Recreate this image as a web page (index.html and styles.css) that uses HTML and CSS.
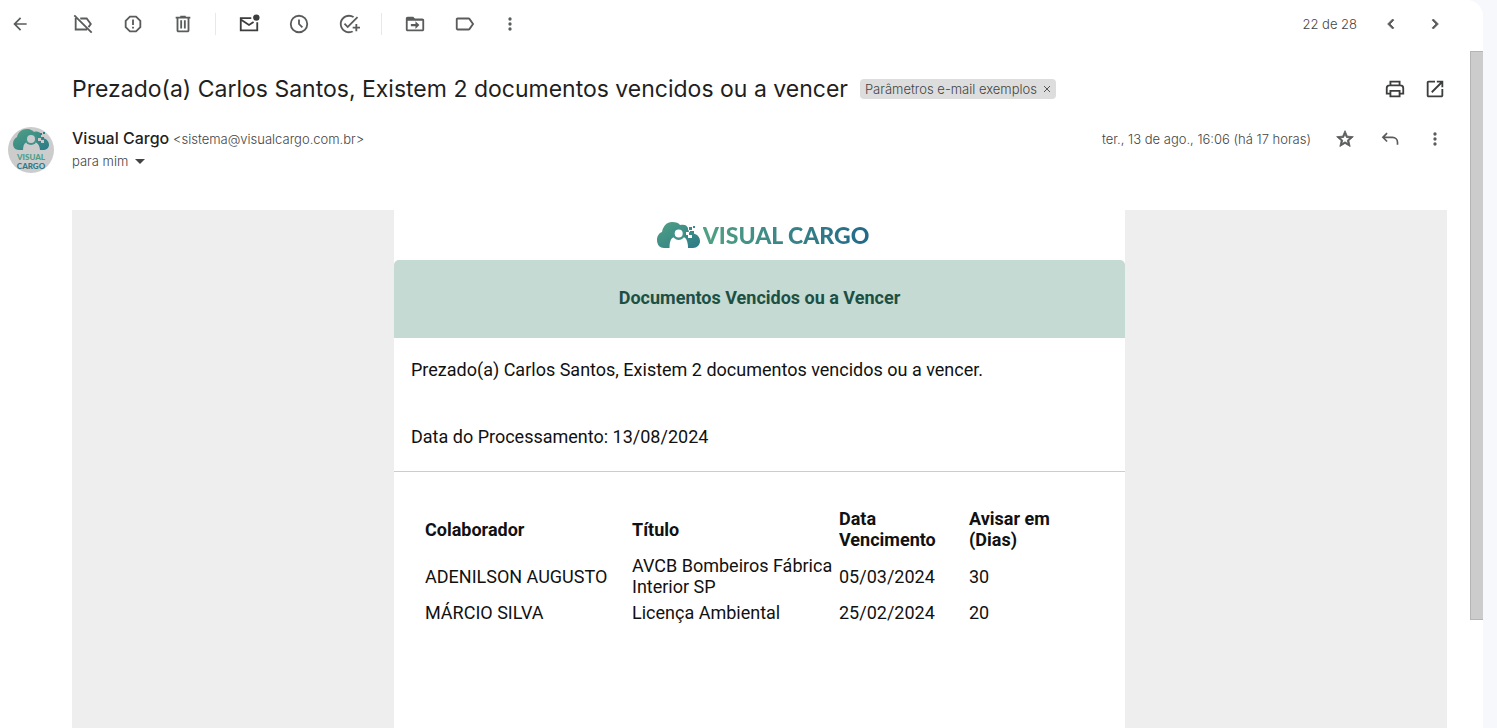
FILE: index.html
```html
<!DOCTYPE html>
<html lang="pt-BR">
<head>
    <meta charset="UTF-8">
    <meta name="viewport" content="width=device-width, initial-scale=1.0">
    <title>Documentos vencidos ou a vencer</title>
    <link rel="stylesheet" href="styles.css">
</head>
<body>
    <div class="panel">
        <!-- Toolbar -->
        <header class="toolbar">
            <button class="icon-button back" aria-label="Voltar">
                <svg class="icon" viewBox="0 0 24 24"><path d="M20 11H7.83l5.59-5.59L12 4l-8 8 8 8 1.41-1.41L7.83 13H20z"/></svg>
            </button>
            <div class="group">
                <button class="icon-button" aria-label="Remover marcador">
                    <svg class="icon large line" viewBox="0 0 24 24"><path d="M9 6h7l4.500 6-2.500 3.400M4 5.500V18h12.500M2.500 2.500l19 19"/></svg>
                </button>
                <button class="icon-button" aria-label="Denunciar spam">
                    <svg class="icon large" viewBox="0 0 24 24"><path d="M15.730 3H8.270L3 8.270v7.460L8.270 21h7.460L21 15.730V8.270zM19 14.900L14.900 19H9.100L5 14.900V9.100L9.100 5h5.800L19 9.100zM11 7h2v6h-2zM11 15h2v2h-2z"/></svg>
                </button>
                <button class="icon-button" aria-label="Excluir">
                    <svg class="icon large" viewBox="0 0 24 24"><path d="M15 4V3H9v1H4v2h1v13c0 1.100.9 2 2 2h10c1.100 0 2-.9 2-2V6h1V4zm2 15H7V6h10zM9 8h2v9H9zm4 0h2v9h-2z"/></svg>
                </button>
            </div>
            <div class="group">
                <button class="icon-button dark" aria-label="Marcar como não lida">
                    <svg class="icon large line" viewBox="0 0 24 24"><path d="M14.500 5.500H3V19h18v-9M3 7l9 6 5-3.300"/><circle class="dot" cx="20" cy="5" r="3.500"/></svg>
                </button>
                <button class="icon-button" aria-label="Adiar">
                    <svg class="icon large" viewBox="0 0 24 24"><path d="M12 2a10 10 0 1 0 0 20 10 10 0 0 0 0-20zm0 18a8 8 0 1 1 0-16 8 8 0 0 1 0 16zM13 7h-2v5.400l4 4 1.400-1.400-3.400-3.400z"/></svg>
                </button>
                <button class="icon-button" aria-label="Adicionar às tarefas">
                    <svg class="icon large" viewBox="0 0 24 24"><path d="M22 5.180L10.590 16.600l-4.240-4.240 1.410-1.410 2.830 2.830 10-10zM12 20c-4.410 0-8-3.590-8-8s3.590-8 8-8c1.570 0 3.040.46 4.280 1.250l1.450-1.450A10.020 10.020 0 0 0 12 2C6.480 2 2 6.480 2 12s4.480 10 10 10c1.730 0 3.360-.44 4.780-1.220l-1.500-1.500c-1 .46-2.110.72-3.280.72zm7-5h-3v2h3v3h2v-3h3v-2h-3v-3h-2z"/></svg>
                </button>
            </div>
            <div class="group last">
                <button class="icon-button" aria-label="Mover para">
                    <svg class="icon large" viewBox="0 0 24 24"><path d="M20 6h-8l-2-2H4c-1.100 0-2 .9-2 2v12c0 1.100.9 2 2 2h16c1.100 0 2-.9 2-2V8c0-1.100-.9-2-2-2zm0 12H4V8.500h16zM12.500 9l4.300 4.200-4.300 4.200v-3H7.500V12h5z"/></svg>
                </button>
                <button class="icon-button" aria-label="Marcadores">
                    <svg class="icon large" viewBox="0 0 24 24"><path d="M17.630 5.840C17.270 5.330 16.670 5 16 5H4c-1.100 0-2 .9-2 2v10c0 1.100.9 2 2 2h12c.67 0 1.270-.33 1.630-.84L22 12zM16 17H4V7h12l3.550 5z"/></svg>
                </button>
                <button class="icon-button narrow" aria-label="Mais">
                    <svg class="icon" viewBox="0 0 24 24"><path d="M12 8a2 2 0 1 0 0-4 2 2 0 0 0 0 4zm0 2a2 2 0 1 0 0 4 2 2 0 0 0 0-4zm0 6a2 2 0 1 0 0 4 2 2 0 0 0 0-4z"/></svg>
                </button>
            </div>
            <div class="pager">
                <span class="count">22 de 28</span>
                <button class="icon-button" aria-label="Mais recente">
                    <svg class="icon bold" viewBox="0 0 24 24"><path d="M15.410 7.410L14 6l-6 6 6 6 1.410-1.410L10.830 12z"/></svg>
                </button>
                <button class="icon-button" aria-label="Mais antiga">
                    <svg class="icon bold" viewBox="0 0 24 24"><path d="M10 6L8.590 7.410 13.170 12l-4.580 4.590L10 18l6-6z"/></svg>
                </button>
            </div>
        </header>

        <div class="content">
            <main class="message">
                <!-- Subject -->
                <div class="subject-row">
                    <h1 class="subject">Prezado(a) Carlos Santos, Existem 2 documentos vencidos ou a vencer</h1>
                    <span class="chip">Parâmetros e-mail exemplos
                        <button class="chip-close" aria-label="Remover marcador da conversa">
                            <svg viewBox="0 0 8 8"><path d="M1 1l6 6M7 1L1 7"/></svg>
                        </button>
                    </span>
                    <div class="subject-actions">
                        <button class="icon-button dark" aria-label="Imprimir">
                            <svg class="icon large line" viewBox="0 0 24 24"><path d="M7 8V4h10v4M7 17H3v-6c0-1.700 1.300-3 3-3h12c1.700 0 3 1.300 3 3v6h-4M7 14h10v6H7z"/></svg>
                        </button>
                        <button class="icon-button dark" aria-label="Abrir em nova janela">
                            <svg class="icon large" viewBox="0 0 24 24"><path d="M19 19H5V5h7V3H5c-1.100 0-2 .9-2 2v14c0 1.100.9 2 2 2h14c1.100 0 2-.9 2-2v-7h-2zM14 3v2h3.590l-9.830 9.830 1.410 1.410L19 6.410V10h2V3z"/></svg>
                        </button>
                    </div>
                </div>

                <!-- Sender -->
                <div class="sender-row">
                    <svg class="avatar" viewBox="0 0 46 46" role="img" aria-label="Visual Cargo">
                        <defs>
                            <linearGradient id="brand" x1="0" y1="0" x2="1" y2="1">
                                <stop offset="0" stop-color="#50a184"/>
                                <stop offset="1" stop-color="#2b7a88"/>
                            </linearGradient>
                        </defs>
                        <circle cx="23" cy="23" r="23" fill="#cccccc"/>
                        <path fill="url(#brand)" d="M11 23c-4 0-6-3-6-6 0-4 2-6 4-7 1-5 5-8 10-8 4 0 6 2 7 3 3-1 6 0 7 2l2 4c4 1 6 4 6 7s-3 5-6 5z"/>
                        <path fill="#cccccc" d="M15 24c0-5 1-8 4-9h8c3 1 5 4 5 9z"/>
                        <circle cx="23" cy="12" r="6" fill="#42948a"/>
                        <circle cx="23" cy="12" r="4" fill="#cccccc"/>
                        <path fill="#cccccc" d="M30 11h3v3h-3zM33 13h3v3h-3zM33 8h2v2h-2z"/>
                        <path fill="#2f8086" d="M32 6h2v2h-2zM35 5h2v2h-2zM34 10h2v2h-2z"/>
                        <text class="avatar-text" x="23" y="33" fill="#4aa086">VISUAL</text>
                        <text class="avatar-text" x="23" y="42" fill="#2b7a88">CARGO</text>
                    </svg>
                    <div class="sender">
                        <div><span class="name">Visual Cargo</span> <span class="address">&lt;sistema@visualcargo.com.br&gt;</span></div>
                        <button class="recipient">para mim <span class="caret"></span></button>
                    </div>
                    <div class="sender-actions">
                        <time class="date" datetime="2024-08-13T16:06">ter., 13 de ago., 16:06 (há 17 horas)</time>
                        <button class="icon-button" aria-label="Com estrela">
                            <svg class="icon bold" viewBox="0 0 24 24"><path d="M22 9.240l-7.190-.62L12 2 9.190 8.630 2 9.240l5.460 4.730L5.820 21 12 17.270 18.180 21l-1.630-7.030zM12 15.400l-3.760 2.270 1-4.280-3.320-2.880 4.380-.38L12 6.100l1.710 4.040 4.380.38-3.320 2.880 1 4.280z"/></svg>
                        </button>
                        <button class="icon-button" aria-label="Responder">
                            <svg class="icon line" viewBox="0 0 24 24"><path d="M8.500 5L3.500 10l5 5M3.500 10H15c3.500 0 6 2.500 6 6v3"/></svg>
                        </button>
                        <button class="icon-button" aria-label="Mais opções">
                            <svg class="icon" viewBox="0 0 24 24"><path d="M12 8a2 2 0 1 0 0-4 2 2 0 0 0 0 4zm0 2a2 2 0 1 0 0 4 2 2 0 0 0 0-4zm0 6a2 2 0 1 0 0 4 2 2 0 0 0 0-4z"/></svg>
                        </button>
                    </div>
                </div>

                <!-- E-mail body -->
                <div class="mail-body">
                    <article class="card">
                        <div class="logo">
                            <svg class="logo-mark" viewBox="0 0 43 26" aria-hidden="true">
                                <path fill="url(#brand)" d="M7 26c-4 0-7-3-7-8 0-4 2-7 5-8C6 4 10 0 15 0c4 0 7 1 8 3 4-1 7 0 8 3l1 4 6 2c3 1 5 4 5 7 0 4-3 7-7 7z"/>
                                <path fill="#fff" d="M12.500 26c0-6 1-10 5-11h9c3 1 4.500 5 4.500 11z"/>
                                <circle cx="21.700" cy="11.500" r="6.500" fill="#429289"/>
                                <circle cx="21.700" cy="11.500" r="4" fill="#fff"/>
                                <path fill="#fff" d="M32 0h11v11H33V8h-2zM29 10h3v3h-3zM31 13h4v3h-4z"/>
                                <path fill="#388a88" d="M32 5h3v3h-3zM36 4h2v2h-2zM33 9h4v4h-4z"/>
                            </svg>
                            <span class="logo-text">VISUAL CARGO</span>
                        </div>
                        <h2 class="banner">Documentos Vencidos ou a Vencer</h2>
                        <div class="intro">
                            <p>Prezado(a) Carlos Santos, Existem 2 documentos vencidos ou a vencer.</p>
                            <p>Data do Processamento: 13/08/2024</p>
                        </div>
                        <table class="documents">
                            <thead>
                                <tr>
                                    <th class="col-wide">Colaborador</th>
                                    <th class="col-wide">Título</th>
                                    <th class="col-date">Data Vencimento</th>
                                    <th>Avisar em (Dias)</th>
                                </tr>
                            </thead>
                            <tbody>
                                <tr>
                                    <td>ADENILSON AUGUSTO</td>
                                    <td>AVCB Bombeiros Fábrica Interior SP</td>
                                    <td>05/03/2024</td>
                                    <td>30</td>
                                </tr>
                                <tr>
                                    <td>MÁRCIO SILVA</td>
                                    <td>Licença Ambiental</td>
                                    <td>25/02/2024</td>
                                    <td>20</td>
                                </tr>
                            </tbody>
                        </table>
                    </article>
                </div>
            </main>
            <div class="scrollbar"><div class="thumb"></div></div>
        </div>
    </div>
</body>
</html>
```
FILE: styles.css
```css
* {
    box-sizing: border-box;
}
body {
    margin: 0;
    background-color: #f6f8fc;
    font-family: Inter, "Liberation Sans", sans-serif;
    font-size: 13px;
    font-weight: 300;
    color: #444;
}
button {
    border: none;
    background: none;
    padding: 0;
    font: inherit;
    color: inherit;
    cursor: pointer;
}
.panel {
    display: flex;
    flex-direction: column;
    height: 100vh;
    margin-right: 14px;
    background-color: #fff;
    border-top-right-radius: 16px;
    overflow: hidden;
}

/* toolbar */
.toolbar {
    display: flex;
    align-items: center;
    flex: none;
    height: 51px;
    padding: 0 26px 3px 0;
}
.icon-button {
    display: flex;
    align-items: center;
    justify-content: center;
    flex: none;
    width: 50px;
    height: 36px;
    color: #5a5c5b;
}
.icon-button.dark {
    color: #3c3d3d;
}
.icon-button.back,
.icon-button.narrow {
    width: 40px;
}
.back {
    margin-right: 18px;
}
.icon {
    width: 20px;
    height: 20px;
    fill: currentColor;
}
.icon.large {
    width: 22px;
    height: 22px;
}
.icon.line {
    fill: none;
    stroke: currentColor;
    stroke-width: 2;
}
.icon.bold {
    stroke: currentColor;
    stroke-width: 1;
}
.icon .dot {
    fill: currentColor;
    stroke: none;
}
.group {
    display: flex;
    align-items: center;
}
.group:not(.last)::after {
    content: "";
    width: 1px;
    height: 22px;
    margin: 0 8px 0 7px;
    background-color: #e6e8ea;
}
.pager {
    display: flex;
    align-items: center;
    margin-left: auto;
}
.pager .icon-button {
    width: 44px;
}
.count {
    margin-right: 12px;
}

/* message */
.content {
    display: flex;
    flex: 1;
    min-height: 0;
}
.message {
    display: flex;
    flex-direction: column;
    flex: 1;
    padding-top: 20px;
}
.subject-row {
    display: flex;
    align-items: center;
    min-height: 36px;
    padding: 0 15px 0 72px;
}
.subject {
    margin: 0 12px 0 0;
    font-size: 23px;
    font-weight: 400;
    line-height: 28px;
    color: #1f1f1f;
}
.chip {
    display: flex;
    align-items: center;
    gap: 6px;
    height: 20px;
    padding: 0 5px;
    border-radius: 4px;
    background-color: #ddd;
    white-space: nowrap;
}
.chip-close {
    display: flex;
}
.chip-close svg {
    width: 8px;
    height: 8px;
    stroke: #555;
}
.subject-actions {
    display: flex;
    margin-left: auto;
}
.subject-actions .icon-button {
    width: 40px;
}
.sender-row {
    display: flex;
    align-items: flex-start;
    margin-top: 20px;
    padding: 0 13px 0 8px;
}
.avatar {
    flex: none;
    width: 46px;
    height: 46px;
    margin-right: 18px;
}
.avatar-text {
    font-family: Lato, sans-serif;
    font-size: 8px;
    font-weight: 900;
    text-anchor: middle;
}
.sender {
    line-height: 22px;
}
.name {
    font-size: 16px;
    font-weight: 500;
    color: #1f1f1f;
}
.recipient {
    display: flex;
    align-items: center;
    gap: 7px;
    line-height: 22px;
}
.caret {
    border: 5px solid transparent;
    border-top-color: #444;
    border-bottom: none;
}
.sender-actions {
    display: flex;
    align-items: center;
    margin-left: auto;
    height: 24px;
}
.sender-actions .icon-button {
    width: 45px;
}
.date {
    margin-right: 11px;
}

/* e-mail */
.mail-body {
    flex: 1;
    display: flex;
    justify-content: center;
    margin: 37px 23px 0 72px;
    background-color: #eee;
    font-family: Roboto, sans-serif;
    font-size: 18px;
    font-weight: 400;
    line-height: 21px;
    color: #111;
}
.card {
    width: 100%;
    max-width: 731px;
    background-color: #fff;
}
.logo {
    display: flex;
    align-items: center;
    justify-content: center;
    gap: 3px;
    height: 50px;
    padding-left: 7px;
}
.logo-mark {
    width: 43px;
    height: 26px;
}
.logo-text {
    font-family: Lato, sans-serif;
    font-size: 23px;
    font-weight: 900;
    line-height: 30px;
    color: transparent;
    background: linear-gradient(90deg, #50a184, #22698a);
    background-clip: text;
    -webkit-background-clip: text;
}
.banner {
    margin: 0;
    padding: 27px 16px 30px;
    border-radius: 5px 5px 0 0;
    background-color: #c5dad2;
    color: #1c5045;
    font-size: 18px;
    font-weight: 700;
    text-align: center;
}
.intro {
    padding: 21px 17px 24px;
    border-bottom: 1px solid #ccc;
}
.intro p {
    margin: 0 0 46px;
}
.intro p:last-child {
    margin-bottom: 0;
}
.documents {
    width: 672px;
    max-width: 100%;
    margin: 33px 0 0 29px;
    border-collapse: collapse;
    table-layout: fixed;
}
.documents th,
.documents td {
    padding: 3px 2px 2px;
    text-align: left;
    vertical-align: middle;
}
.documents th {
    font-weight: 700;
}
.col-wide {
    width: 207px;
}
.col-date {
    width: 130px;
}

.scrollbar {
    flex: none;
    width: 13px;
}
.thumb {
    height: 84%;
    border: 1px solid #b5b5b5;
    border-right: none;
    background-color: #ccc;
}
```
